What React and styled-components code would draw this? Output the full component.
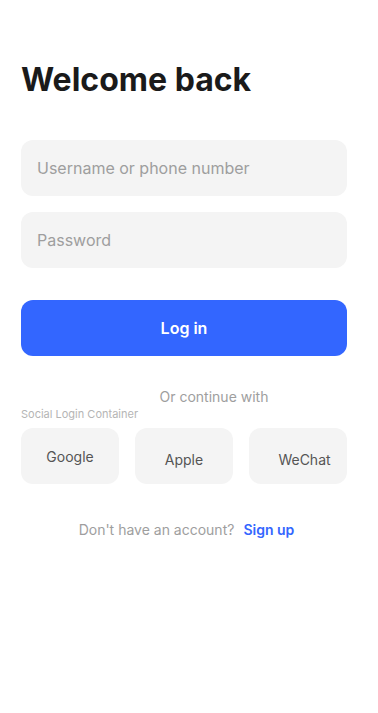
import React from 'react';
import styled, { createGlobalStyle } from 'styled-components';

const GlobalStyle = createGlobalStyle`
  html, body {
    margin: 0;
    padding: 0;
    background: #ffffff;
    font-family: Inter, "Noto Sans", sans-serif;
  }
  * { box-sizing: border-box; }
`;

const Page = styled.div`
  width: 378px;
  min-height: 713px;
  padding: 58px 31px 0 21px;
  display: flex;
  flex-direction: column;
`;

const Title = styled.h1`
  margin: 0 0 38px;
  font-size: 32px;
  line-height: 44px;
  font-weight: 700;
  color: #1a1a1a;
`;

const Form = styled.form`
  display: flex;
  flex-direction: column;
  gap: 16px;
`;

const Input = styled.input`
  width: 100%;
  height: 56px;
  border: none;
  border-radius: 12px;
  background: #f4f4f4;
  padding: 0 16px;
  font-family: inherit;
  font-size: 16px;
  color: #1a1a1a;
  outline: none;

  &::placeholder {
    color: #9e9e9e;
  }
`;

const LoginButton = styled.button`
  margin-top: 16px;
  height: 56px;
  border: none;
  border-radius: 12px;
  background: #3366ff;
  color: #ffffff;
  font-family: inherit;
  font-size: 16px;
  font-weight: 600;
  cursor: pointer;
`;

const Divider = styled.div`
  margin-top: 32px;
  padding-left: 60px;
  text-align: center;
  font-size: 14px;
  line-height: 18px;
  color: #9e9e9e;
`;

const SocialLabel = styled.div`
  margin-top: 1px;
  font-size: 11px;
  line-height: 14px;
  color: #b5b5b5;
`;

const SocialRow = styled.div`
  margin-top: 7px;
  display: grid;
  grid-template-columns: repeat(3, 1fr);
  gap: 16px;
`;

const SocialButton = styled.button`
  height: 56px;
  border: none;
  border-radius: 12px;
  background: #f4f4f4;
  color: #555555;
  font-family: inherit;
  font-size: 14px;
  cursor: pointer;
  padding: ${(p) => p.$pad || '0'};
`;

const Footer = styled.div`
  margin-top: 37px;
  padding-left: 5px;
  display: flex;
  justify-content: center;
  gap: 9px;
  font-size: 14px;
  line-height: 18px;
`;

const Muted = styled.span`
  color: #9e9e9e;
`;

const SignUp = styled.a`
  color: #3366ff;
  font-weight: 600;
  text-decoration: none;
  cursor: pointer;
`;

export default function App() {
  return (
    <>
      <GlobalStyle />
      <Page>
        <Title>Welcome back</Title>
        <Form onSubmit={(e) => e.preventDefault()}>
          <Input type="text" placeholder="Username or phone number" />
          <Input type="password" placeholder="Password" />
          <LoginButton type="submit">Log in</LoginButton>
        </Form>
        <Divider>Or continue with</Divider>
        <SocialLabel>Social Login Container</SocialLabel>
        <SocialRow>
          <SocialButton>Google</SocialButton>
          <SocialButton $pad="6px 0 0">Apple</SocialButton>
          <SocialButton $pad="6px 0 0 13px">WeChat</SocialButton>
        </SocialRow>
        <Footer>
          <Muted>Don't have an account?</Muted>
          <SignUp>Sign up</SignUp>
        </Footer>
      </Page>
    </>
  );
}
